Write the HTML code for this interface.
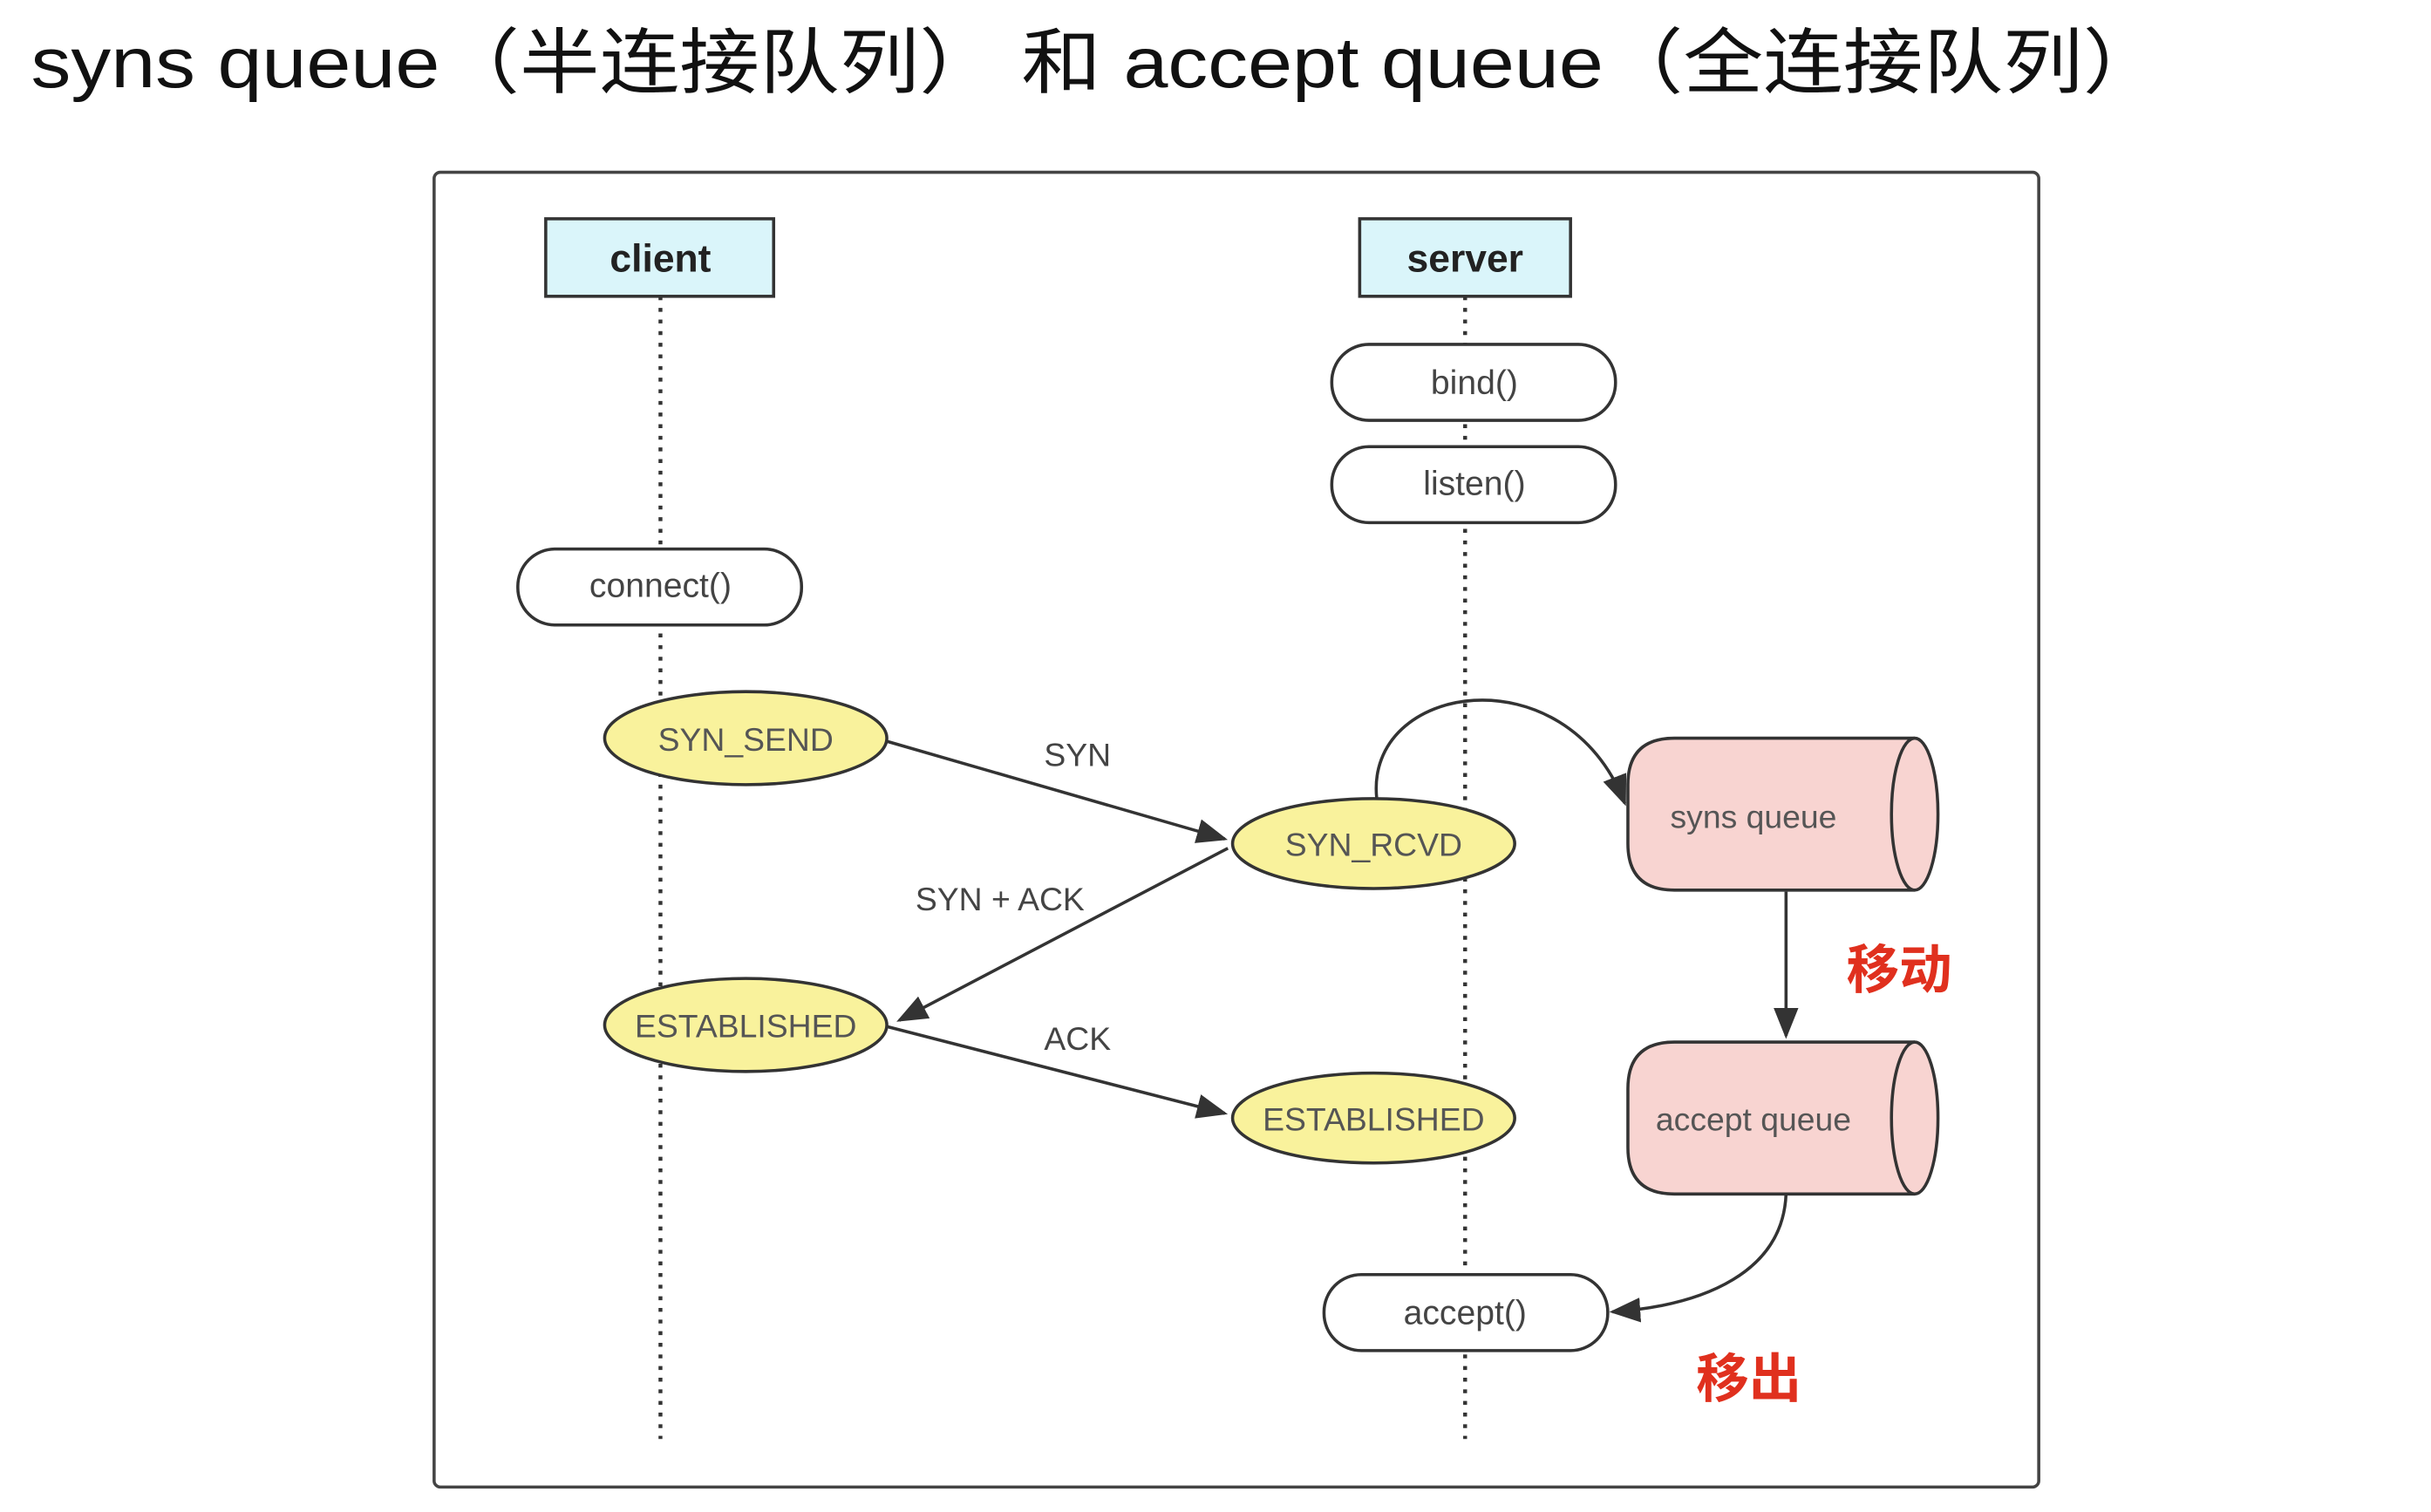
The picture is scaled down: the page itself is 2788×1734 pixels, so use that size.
<!DOCTYPE html>
<html><head><meta charset="utf-8"><style>
html,body{margin:0;padding:0;background:#fff;}
svg{display:block;}
text{font-family:"Liberation Sans","Noto Sans CJK SC",sans-serif;}
</style></head><body>
<svg width="2788" height="1734" viewBox="0 0 1568 975" xmlns="http://www.w3.org/2000/svg">
<defs>
<marker id="ah2" viewBox="0 0 10 10" refX="9" refY="5" markerWidth="20" markerHeight="20" markerUnits="userSpaceOnUse" orient="auto"><path d="M0,1 L10,5 L0,9 z" fill="#333"/></marker>
</defs>
<rect width="1568" height="975" fill="#fff"/>
<text x="20" y="56" font-size="46" fill="#111" textLength="1375" lengthAdjust="spacingAndGlyphs">syns queue（半连接队列） 和 accept queue（全连接队列）</text>
<rect x="280" y="111" width="1035" height="848" rx="4" fill="#fff" stroke="#444" stroke-width="2"/>
<line x1="426" y1="191" x2="426" y2="928" stroke="#333" stroke-width="2.5" stroke-dasharray="2.5,5"/>
<line x1="945" y1="191" x2="945" y2="928" stroke="#333" stroke-width="2.5" stroke-dasharray="2.5,5"/>
<rect x="352" y="141" width="147" height="50" fill="#daf5fa" stroke="#333" stroke-width="2"/>
<text x="426" y="175" font-size="25" font-weight="bold" text-anchor="middle" fill="#222">client</text>
<rect x="877" y="141" width="136" height="50" fill="#daf5fa" stroke="#333" stroke-width="2"/>
<text x="945" y="175" font-size="25" font-weight="bold" text-anchor="middle" fill="#222">server</text>
<g fill="#fff" stroke="#333" stroke-width="2">
<rect x="859" y="222" width="183" height="49" rx="24"/>
<rect x="859" y="288" width="183" height="49" rx="24"/>
<rect x="334" y="354" width="183" height="49" rx="24"/>
<rect x="854" y="822" width="183" height="49" rx="24"/>
</g>
<g font-size="22" fill="#444" text-anchor="middle">
<text x="951" y="254">bind()</text>
<text x="951" y="319">listen()</text>
<text x="426" y="385">connect()</text>
<text x="945" y="854">accept()</text>
</g>
<g stroke="#333" stroke-width="2" fill="none">
<line x1="572" y1="478" x2="790" y2="541" marker-end="url(#ah2)"/>
<line x1="792" y1="547" x2="580" y2="658" marker-end="url(#ah2)"/>
<line x1="572" y1="662" x2="790" y2="718" marker-end="url(#ah2)"/>
<path d="M888,515 C880,440 1010,420 1048,518" marker-end="url(#ah2)"/>
<line x1="1152" y1="575" x2="1152" y2="668" marker-end="url(#ah2)"/>
<path d="M1152,770 C1150,820 1100,842 1040,846" marker-end="url(#ah2)"/>
</g>
<g font-size="21" fill="#444" text-anchor="middle">
<text x="695" y="494">SYN</text>
<text x="645" y="587">SYN + ACK</text>
<text x="695" y="677">ACK</text>
</g>
<g fill="#f9f29c" stroke="#333" stroke-width="2">
<ellipse cx="481" cy="476" rx="91" ry="30"/>
<ellipse cx="886" cy="544" rx="91" ry="29"/>
<ellipse cx="481" cy="661" rx="91" ry="30"/>
<ellipse cx="886" cy="721" rx="91" ry="29"/>
</g>
<g font-size="21" fill="#555" text-anchor="middle">
<text x="481" y="484">SYN_SEND</text>
<text x="886" y="552">SYN_RCVD</text>
<text x="481" y="669">ESTABLISHED</text>
<text x="886" y="729">ESTABLISHED</text>
</g>
<g fill="#f8d4d1" stroke="#333" stroke-width="2">
<path d="M1235,476 L1080,476 Q1050,476 1050,506 L1050,544 Q1050,574 1080,574 L1235,574"/>
<ellipse cx="1235" cy="525" rx="15" ry="49"/>
<path d="M1235,672 L1080,672 Q1050,672 1050,702 L1050,740 Q1050,770 1080,770 L1235,770"/>
<ellipse cx="1235" cy="721" rx="15" ry="49"/>
</g>
<g font-size="21" fill="#555" text-anchor="middle">
<text x="1131" y="534">syns queue</text>
<text x="1131" y="729">accept queue</text>
</g>
<g font-size="34" font-weight="bold" fill="#e0301e" text-anchor="middle">
<text x="1225" y="637">移动</text>
<text x="1128" y="901">移出</text>
</g>
</svg>
</body></html>
